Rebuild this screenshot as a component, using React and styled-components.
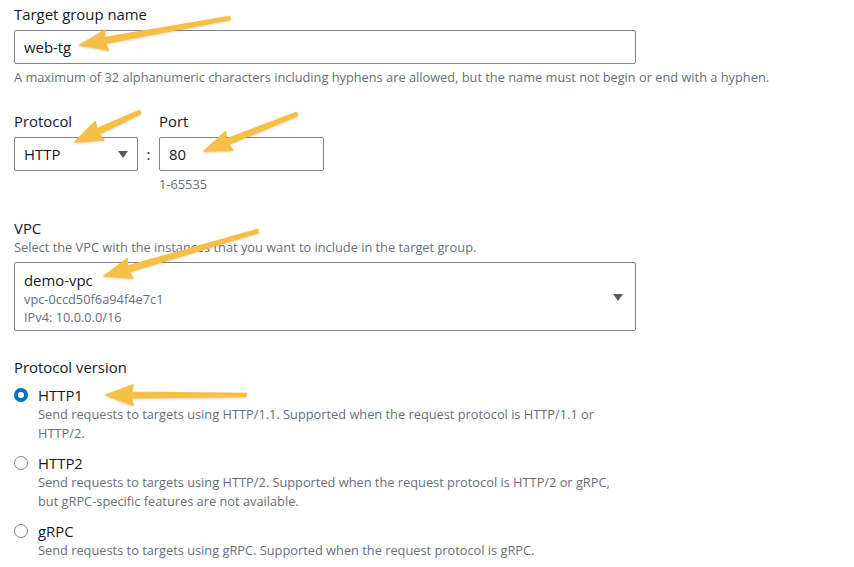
import React from 'react';
import styled, { createGlobalStyle } from 'styled-components';

const colors = {
  text: '#16191f',
  muted: '#687078',
  border: '#7d8590',
  blue: '#0073bb',
  arrow: '#f6bf45',
};

const fs = { base: '14.9px', small: '12.8px' };

const GlobalStyle = createGlobalStyle`
  body {
    margin: 0;
    background: #ffffff;
    font-family: "Open Sans", "Noto Sans", sans-serif;
    color: ${colors.text};
  }
`;

const Page = styled.div`
  position: relative;
  width: 854px;
  height: 567px;
  overflow: hidden;
  padding: 4px 14px 0;
  box-sizing: border-box;
`;

const Field = styled.div`
  margin-bottom: ${p => p.gap || 26}px;
`;

const Label = styled.div`
  font-size: ${fs.base};
  line-height: 20px;
  margin-bottom: ${p => (p.tight ? 1 : 6)}px;
`;

const Hint = styled.div`
  font-size: ${fs.small};
  line-height: 16px;
  color: ${colors.muted};
  margin-top: ${p => p.top || 0}px;
`;

const Box = styled.div`
  display: flex;
  align-items: center;
  box-sizing: border-box;
  width: ${p => p.width}px;
  height: ${p => p.height || 34}px;
  padding: 0 9px;
  border: 1px solid ${colors.border};
  border-radius: 2px;
  font-size: ${fs.base};
  background: #fff;
`;

const Caret = styled.span`
  margin-left: auto;
  width: 0;
  height: 0;
  border-left: 5px solid transparent;
  border-right: 5px solid transparent;
  border-top: 7px solid #545b64;
`;

const Row = styled.div`
  display: flex;
  align-items: flex-start;
`;

const Colon = styled.span`
  width: 21px;
  text-align: center;
  font-size: ${fs.base};
  line-height: 34px;
  margin-top: 26px;
`;

const Column = styled.div`
  display: flex;
  flex-direction: column;
`;

const VpcBox = styled(Box)`
  height: 69px;
  margin-top: 7px;
  padding: 7px 9px 3px;
  align-items: flex-start;
`;

const VpcText = styled.div`
  display: flex;
  flex-direction: column;
`;

const VpcName = styled.div`
  font-size: ${fs.base};
  line-height: 20px;
`;

const VpcMeta = styled.div`
  font-size: ${fs.small};
  line-height: 18px;
  color: ${colors.muted};
`;

const VpcCaret = styled(Caret)`
  align-self: center;
  margin-right: 3px;
  margin-top: -2px;
`;

const Options = styled.div`
  display: flex;
  flex-direction: column;
  gap: 10px;
  margin-top: 8px;
`;

const Option = styled.div`
  display: grid;
  grid-template-columns: 14px 1fr;
  column-gap: 10px;
`;

const Radio = styled.span`
  width: 14px;
  height: 14px;
  box-sizing: border-box;
  border-radius: 50%;
  margin-top: 3px;
  border: ${p => (p.checked ? `4px solid ${colors.blue}` : `1.5px solid ${colors.border}`)};
  background: #fff;
`;

const OptionTitle = styled.div`
  font-size: ${fs.base};
  line-height: 20px;
`;

const OptionDesc = styled.div`
  grid-column: 2;
  font-size: ${fs.small};
  line-height: 19px;
  color: ${colors.muted};
`;

const Overlay = styled.svg`
  position: absolute;
  top: 0;
  left: 0;
  pointer-events: none;
  filter: drop-shadow(0 1px 1px rgba(120, 90, 0, 0.25));
`;

const arrows = [
  [230, 18, 80, 45],
  [140, 112, 75, 142],
  [297, 114, 204, 151],
  [258, 231, 104, 276],
  [246, 395, 106, 395],
];

const arrowPoints = ([x1, y1, x2, y2]) => {
  const len = Math.hypot(x2 - x1, y2 - y1);
  const dx = (x2 - x1) / len;
  const dy = (y2 - y1) / len;
  const nx = -dy;
  const ny = dx;
  const L = 23;
  const W = 10;
  const bx = x2 - dx * L;
  const by = y2 - dy * L;
  const nb = (k, w) => [bx + dx * k + nx * w, by + dy * k + ny * w];
  const pts = [
    [x1 + nx * 1.6, y1 + ny * 1.6],
    nb(-2, 2.8),
    nb(-4, W),
    [x2, y2],
    nb(-4, -W),
    nb(-2, -2.8),
    [x1 - nx * 1.6, y1 - ny * 1.6],
  ];
  return pts.map(p => p.map(v => v.toFixed(1)).join(',')).join(' ');
};

const protocolOptions = [
  {
    name: 'HTTP1',
    checked: true,
    lines: [
      'Send requests to targets using HTTP/1.1. Supported when the request protocol is HTTP/1.1 or',
      'HTTP/2.',
    ],
  },
  {
    name: 'HTTP2',
    lines: [
      'Send requests to targets using HTTP/2. Supported when the request protocol is HTTP/2 or gRPC,',
      'but gRPC-specific features are not available.',
    ],
  },
  {
    name: 'gRPC',
    lines: ['Send requests to targets using gRPC. Supported when the request protocol is gRPC.'],
  },
];

export default function App() {
  return (
    <>
      <GlobalStyle />
      <Page>
        <Field>
          <Label>Target group name</Label>
          <Box width={622}>web-tg</Box>
          <Hint top={5}>
            A maximum of 32 alphanumeric characters including hyphens are allowed, but the name must
            not begin or end with a hyphen.
          </Hint>
        </Field>

        <Field>
          <Row>
            <Column>
              <Label>Protocol</Label>
              <Box width={124}>
                HTTP
                <Caret />
              </Box>
            </Column>
            <Colon>:</Colon>
            <Column>
              <Label>Port</Label>
              <Box width={165}>80</Box>
              <Hint top={5}>1-65535</Hint>
            </Column>
          </Row>
        </Field>

        <Field gap={26}>
          <Label tight>VPC</Label>
          <Hint>Select the VPC with the instances that you want to include in the target group.</Hint>
          <VpcBox width={622}>
            <VpcText>
              <VpcName>demo-vpc</VpcName>
              <VpcMeta>vpc-0ccd50f6a94f4e7c1</VpcMeta>
              <VpcMeta>IPv4: 10.0.0.0/16</VpcMeta>
            </VpcText>
            <VpcCaret />
          </VpcBox>
        </Field>

        <Field>
          <Label>Protocol version</Label>
          <Options>
            {protocolOptions.map(opt => (
              <Option key={opt.name}>
                <Radio checked={opt.checked} />
                <OptionTitle>{opt.name}</OptionTitle>
                <OptionDesc>
                  {opt.lines.map((l, i) => (
                    <div key={i}>{l}</div>
                  ))}
                </OptionDesc>
              </Option>
            ))}
          </Options>
        </Field>

        <Overlay width="854" height="567" viewBox="0 0 854 567">
          {arrows.map((a, i) => (
            <polygon
              key={i}
              points={arrowPoints(a)}
              fill={colors.arrow}
              stroke={colors.arrow}
              strokeWidth="1.5"
              strokeLinejoin="round"
            />
          ))}
        </Overlay>
      </Page>
    </>
  );
}
